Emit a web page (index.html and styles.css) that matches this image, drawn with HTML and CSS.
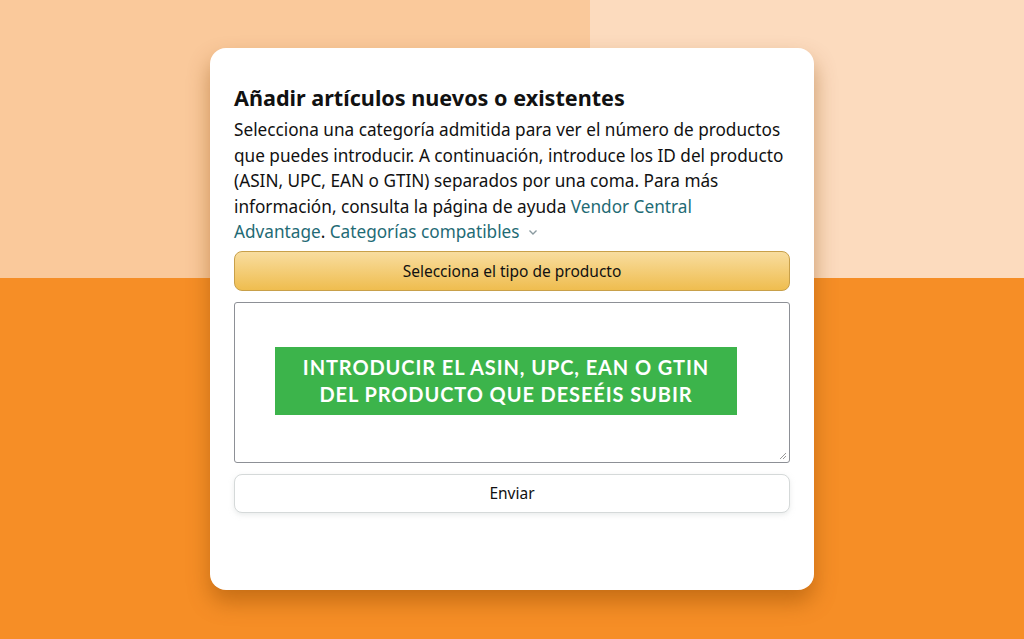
FILE: index.html
```html
<!DOCTYPE html>
<html lang="es">
<head>
<meta charset="utf-8">
<link rel="stylesheet" href="styles.css">
</head>
<body>
<div class="card">
  <h1 class="title">Añadir artículos nuevos o existentes</h1>
  <p class="desc">Selecciona una categoría admitida para ver el número de productos que puedes introducir. A continuación, introduce los ID del producto (ASIN, UPC, EAN o GTIN) separados por una coma. Para más información, consulta la página de ayuda <a class="link">Vendor Central Advantage</a>. <a class="link">Categorías compatibles</a> <svg class="chev" width="10" height="7" viewBox="0 0 10 7"><path d="M1.5 1.5 L5 5 L8.5 1.5" fill="none" stroke="#8a9aa0" stroke-width="1.4"/></svg></p>
  <button class="btn-yellow">Selecciona el tipo de producto</button>
  <div class="area">
    <div class="banner">INTRODUCIR EL ASIN, UPC, EAN O GTIN<br>DEL PRODUCTO QUE DESEÉIS SUBIR</div>
    <svg class="grip" width="8" height="8" viewBox="0 0 8 8"><path d="M7 1 L1 7 M7 4 L4 7" stroke="#999" stroke-width="1"/></svg>
  </div>
  <button class="btn-white">Enviar</button>
</div>
</body>
</html>
```
FILE: styles.css
```css
html, body { margin: 0; padding: 0; }
body {
  width: 1024px;
  height: 639px;
  overflow: hidden;
  background:
    linear-gradient(to bottom, transparent 278px, #f68e26 278px),
    linear-gradient(to right, #fac99b 590px, #fcdbbe 590px);
  font-family: "Noto Sans", "Open Sans", sans-serif;
  padding-top: 48px;
  box-sizing: border-box;
}
.card {
  width: 604px;
  height: 542px;
  margin: 0 auto;
  background: #fff;
  border-radius: 16px;
  box-sizing: border-box;
  padding: 36px 24px 0 24px;
  box-shadow: 0 12px 22px rgba(140, 70, 0, 0.45);
  display: flex;
  flex-direction: column;
}
.title {
  margin: 0;
  font-size: 21.6px;
  line-height: 28px;
  font-weight: 700;
  color: #111;
}
.desc {
  margin: 5px 0 0 0;
  max-width: 550px;
  font-size: 17.2px;
  line-height: 25.5px;
  color: #111;
}
.link { color: #1f6b75; text-decoration: none; }
.chev { margin-left: 4px; vertical-align: 2px; }
.btn-yellow {
  margin-top: 6px;
  height: 40px;
  border: 1px solid #c8a04a;
  border-radius: 8px;
  background: linear-gradient(to bottom, #f8dd9f, #efbd4f);
  font-family: inherit;
  font-size: 15.5px;
  color: #111;
}
.area {
  margin-top: 11px;
  height: 161px;
  border: 1px solid #8d9096;
  border-radius: 3px;
  box-sizing: border-box;
  position: relative;
  display: flex;
  justify-content: flex-start;
  align-items: flex-start;
  padding: 44px 0 0 40px;
}
.banner {
  width: 462px;
  height: 68px;
  background: #3cb44b;
  color: #fff;
  font-family: "Lato", sans-serif;
  font-weight: 700;
  font-size: 20px;
  letter-spacing: 0.9px;
  line-height: 27px;
  text-align: center;
  box-sizing: border-box;
  padding-top: 7px;
}
.grip { position: absolute; right: 2px; bottom: 2px; }
.btn-white {
  margin-top: 11px;
  height: 39px;
  border: 1px solid #d5d9d9;
  border-radius: 8px;
  background: #fff;
  box-shadow: 0 2px 5px rgba(213, 217, 217, 0.5);
  font-family: inherit;
  font-size: 15.5px;
  color: #111;
}
```
